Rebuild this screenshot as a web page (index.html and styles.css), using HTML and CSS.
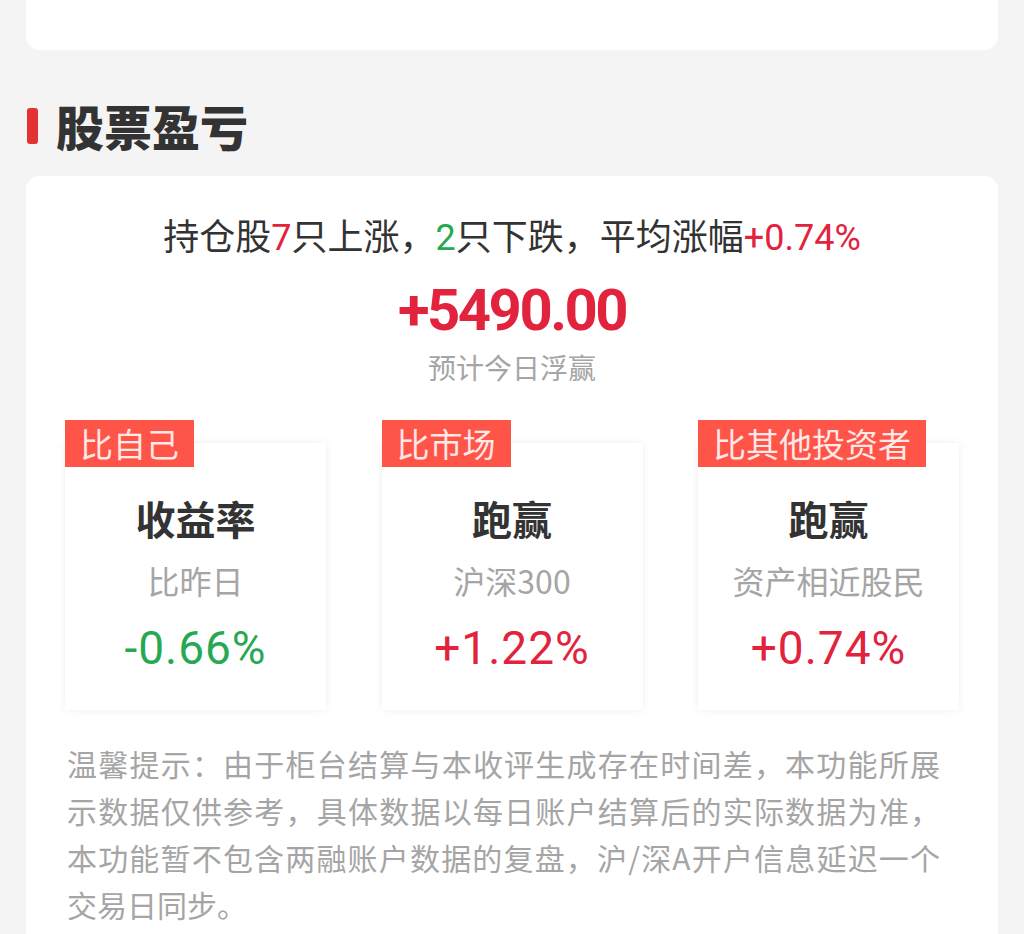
FILE: index.html
```html
<!DOCTYPE html>
<html lang="zh-CN">
<head>
    <meta charset="utf-8">
    <title>股票盈亏</title>
    <meta name="viewport" content="width=device-width, initial-scale=1">
    <link rel="stylesheet" href="styles.css">
</head>
<body>
    <div class="page">
        <div class="top-card"></div>

        <h2 class="section-title"><span class="bar"></span>股票盈亏</h2>

        <div class="card">
            <p class="summary">持仓股<span class="num up">7</span>只上涨，<span class="num down">2</span>只下跌，平均涨幅<span class="num up">+0.74%</span></p>
            <p class="profit">+5490.00</p>
            <p class="profit-label">预计今日浮赢</p>

            <div class="compare">
                <div class="box">
                    <span class="tag">比自己</span>
                    <p class="box-title">收益率</p>
                    <p class="box-sub">比昨日</p>
                    <p class="box-value down">-0.66%</p>
                </div>
                <div class="box">
                    <span class="tag">比市场</span>
                    <p class="box-title">跑赢</p>
                    <p class="box-sub">沪深300</p>
                    <p class="box-value up">+1.22%</p>
                </div>
                <div class="box">
                    <span class="tag">比其他投资者</span>
                    <p class="box-title">跑赢</p>
                    <p class="box-sub">资产相近股民</p>
                    <p class="box-value up">+0.74%</p>
                </div>
            </div>

            <div class="note">
                <div class="note-line">温馨提示：由于柜台结算与本收评生成存在时间差，本功能所展</div>
                <div class="note-line">示数据仅供参考，具体数据以每日账户结算后的实际数据为准，</div>
                <div class="note-line">本功能暂不包含两融账户数据的复盘，沪/深A开户信息延迟一个</div>
                <div class="note-last">交易日同步。</div>
            </div>
        </div>
    </div>
</body>
</html>
```

FILE: styles.css
```css
html {
    background-color: #f4f4f4;
}
body {
    margin: 0;
    font-family: "Noto Sans CJK SC", sans-serif;
    color: #333333;
}
p {
    margin: 0;
}
.page {
    padding: 0 26px;
}
.top-card {
    height: 50px;
    background-color: #ffffff;
    border-radius: 0 0 14px 14px;
}
.section-title {
    display: flex;
    align-items: center;
    gap: 18px;
    margin: 42px 0 17px 0;
    font-size: 48px;
    line-height: 67px;
    font-weight: 900;
    color: #333333;
}
.bar {
    width: 11px;
    height: 36px;
    border-radius: 3px;
    background-color: #e23232;
    margin-left: 1px;
}
.card {
    background-color: #ffffff;
    border-radius: 14px 14px 0 0;
    padding: 33px 0 20px 0;
    text-align: center;
}
.num {
    font-family: Roboto, "Noto Sans CJK SC", sans-serif;
}
.up {
    color: #e2233d;
}
.down {
    color: #27a853;
}
.summary {
    font-size: 36px;
    line-height: 50px;
}
.profit {
    margin-top: 12px;
    font-family: Roboto, sans-serif;
    font-weight: 700;
    font-size: 58px;
    letter-spacing: -2.5px;
    line-height: 70px;
    color: #e2233d;
}
.profit-label {
    margin-top: 2px;
    font-size: 28px;
    line-height: 40px;
    color: #a5a5a5;
}
.compare {
    display: flex;
    justify-content: space-between;
    padding: 0 39px;
    margin-top: 56px;
}
.box {
    position: relative;
    width: 261px;
    padding: 47px 0 34px 0;
    background-color: #ffffff;
    box-shadow: 0 0 8px rgba(0, 0, 0, 0.07);
}
.tag {
    position: absolute;
    top: -23px;
    left: 0;
    height: 47px;
    padding: 0 15px;
    background-color: #ff5549;
    color: #ffe8e6;
    font-size: 33px;
    line-height: 47px;
}
.box-title {
    font-size: 40px;
    line-height: 56px;
    font-weight: 700;
    color: #333333;
}
.box-sub {
    margin-top: 12px;
    font-size: 32px;
    line-height: 44px;
    color: #a5a5a5;
}
.box-value {
    margin-top: 18px;
    font-family: Roboto, sans-serif;
    font-size: 46px;
    letter-spacing: 1px;
    line-height: 56px;
}
.note {
    margin-top: 30px;
    padding: 0 58px 0 41px;
    text-align: left;
    font-size: 30px;
    line-height: 47px;
    color: #a5a5a5;
}
.note-line {
    white-space: nowrap;
    text-align: justify;
    text-align-last: justify;
}
```
